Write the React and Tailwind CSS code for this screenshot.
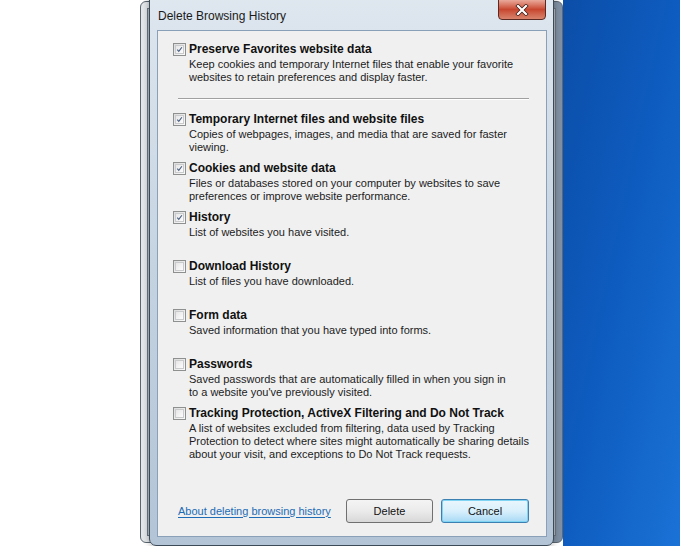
import React from "react";

const topItem = {
  label: "Preserve Favorites website data",
  checked: true,
  lines: [
    "Keep cookies and temporary Internet files that enable your favorite",
    "websites to retain preferences and display faster.",
  ],
};

const items = [
  {
    label: "Temporary Internet files and website files",
    checked: true,
    lines: ["Copies of webpages, images, and media that are saved for faster", "viewing."],
  },
  {
    label: "Cookies and website data",
    checked: true,
    lines: [
      "Files or databases stored on your computer by websites to save",
      "preferences or improve website performance.",
    ],
  },
  { label: "History", checked: true, lines: ["List of websites you have visited."] },
  { label: "Download History", checked: false, lines: ["List of files you have downloaded."] },
  { label: "Form data", checked: false, lines: ["Saved information that you have typed into forms."] },
  {
    label: "Passwords",
    checked: false,
    lines: [
      "Saved passwords that are automatically filled in when you sign in",
      "to a website you've previously visited.",
    ],
  },
  {
    label: "Tracking Protection, ActiveX Filtering and Do Not Track",
    checked: false,
    lines: [
      "A list of websites excluded from filtering, data used by Tracking",
      "Protection to detect where sites might automatically be sharing details",
      "about your visit, and exceptions to Do Not Track requests.",
    ],
  },
];

const CheckBox = ({ checked }) => (
  <div className="w-[13px] h-[13px] border border-[#8e8f8f] bg-gradient-to-br from-[#dcdcdc] to-[#fbfbfb] p-[1px] shrink-0">
    <div className="w-full h-full border border-[#c9cacb] bg-gradient-to-br from-[#e6e6e6] to-[#fdfdfd]">
      {checked && (
        <svg viewBox="0 0 9 9" className="w-full h-full">
          <path d="M1.6 4.6 L3.6 6.8 L7.6 1.6" fill="none" stroke="#4a5f83" strokeWidth="1.5" />
        </svg>
      )}
    </div>
  </div>
);

const Option = ({ item, fixed }) => (
  <div className={fixed ? "h-[49px]" : ""}>
    <div className="flex items-center h-[16px]">
      <CheckBox checked={item.checked} />
      <span className="ml-[3px] font-bold text-[12px] text-[#111] leading-[16px]">{item.label}</span>
    </div>
    <div className="pl-[16px] pt-[1px] text-[#1c1c1c]">
      {item.lines.map((line) => (
        <div key={line} className="leading-[13px] whitespace-nowrap">
          {line}
        </div>
      ))}
    </div>
  </div>
);

export default function App() {
  return (
    <div className="relative w-[680px] h-[546px] overflow-hidden bg-white flex font-['Liberation_Sans',Arial,sans-serif] text-[11px]">
      <div className="w-[140px] shrink-0 bg-white" />

      {/* window behind the dialog */}
      <div className="w-[423px] shrink-0 pt-[1px] pb-[3px]">
        <div className="h-full rounded-[6px] border border-[#5b6670] bg-gradient-to-r from-[#e4e7ea] via-[#c9d2db] to-[#7f8fa1] p-[6px]">
          <div className="h-full border border-[#6d7985] bg-[#b7c2cd]" />
        </div>
      </div>

      <div className="flex-1 bg-gradient-to-br from-[#0b4ea8] via-[#0e5cc0] to-[#1b72d6]" />

      {/* dialog */}
      <div className="absolute left-[149px] top-[-8px] w-[405px] h-[554px] rounded-[7px] border border-[#3c4a58] bg-gradient-to-b from-[#dfe7ef] via-[#c5d3e1] to-[#b2c4d6] flex flex-col shadow-[0_0_6px_rgba(0,0,0,0.35)]">
        <div className="h-[37px] shrink-0 relative">
          <div className="absolute left-[8px] top-[15px] text-[12px] text-[#1a1a1a] leading-[16px]">
            Delete Browsing History
          </div>
          <div className="absolute left-[348px] top-[6px] w-[48px] h-[21px] rounded-b-[4px] border border-[#5b2a22] bg-gradient-to-b from-[#e9a99b] via-[#c7462f] to-[#d9836c] flex items-center justify-center">
            <svg viewBox="0 0 14 12" className="w-[14px] h-[12px]">
              <path d="M3 2 L11 10 M11 2 L3 10" stroke="#3a1a14" strokeWidth="3.6" strokeLinecap="square" />
              <path d="M3 2 L11 10 M11 2 L3 10" stroke="#ffffff" strokeWidth="2.2" strokeLinecap="square" />
            </svg>
          </div>
        </div>

        <div className="flex-1 ml-[7px] mr-[6px] mb-[8px] border border-[#8aa0b8] bg-[#f0f0f0] pt-[10px] pl-[15px] pr-[17px] flex flex-col">
          <Option item={topItem} />
          <div className="mt-[14px] ml-[5px] h-[2px] border-t border-[#a0a0a0] border-b border-b-white" />
          <div className="mt-[11px]">
            {items.map((item, i) => (
              <Option key={item.label} item={item} fixed={i < items.length - 1} />
            ))}
          </div>

          <div className="mt-auto mb-[13px] flex items-center">
            <a className="ml-[5px] text-[#1d6cb5] underline underline-offset-[2px]">
              About deleting browsing history
            </a>
            <div className="ml-auto flex gap-[8px]">
              <button className="w-[87px] h-[24px] rounded-[3px] border border-[#707070] bg-gradient-to-b from-[#f4f4f4] via-[#ebebeb] to-[#d8d8d8] text-[#111] text-[11px]">
                Delete
              </button>
              <button className="w-[88px] h-[24px] rounded-[3px] border border-[#3c7fb1] bg-gradient-to-b from-[#eaf6fd] via-[#d9f0fc] to-[#a7d9f5] text-[#111] text-[11px] shadow-[inset_0_0_0_1px_#7fd3f3]">
                Cancel
              </button>
            </div>
          </div>
        </div>
      </div>
    </div>
  );
}
